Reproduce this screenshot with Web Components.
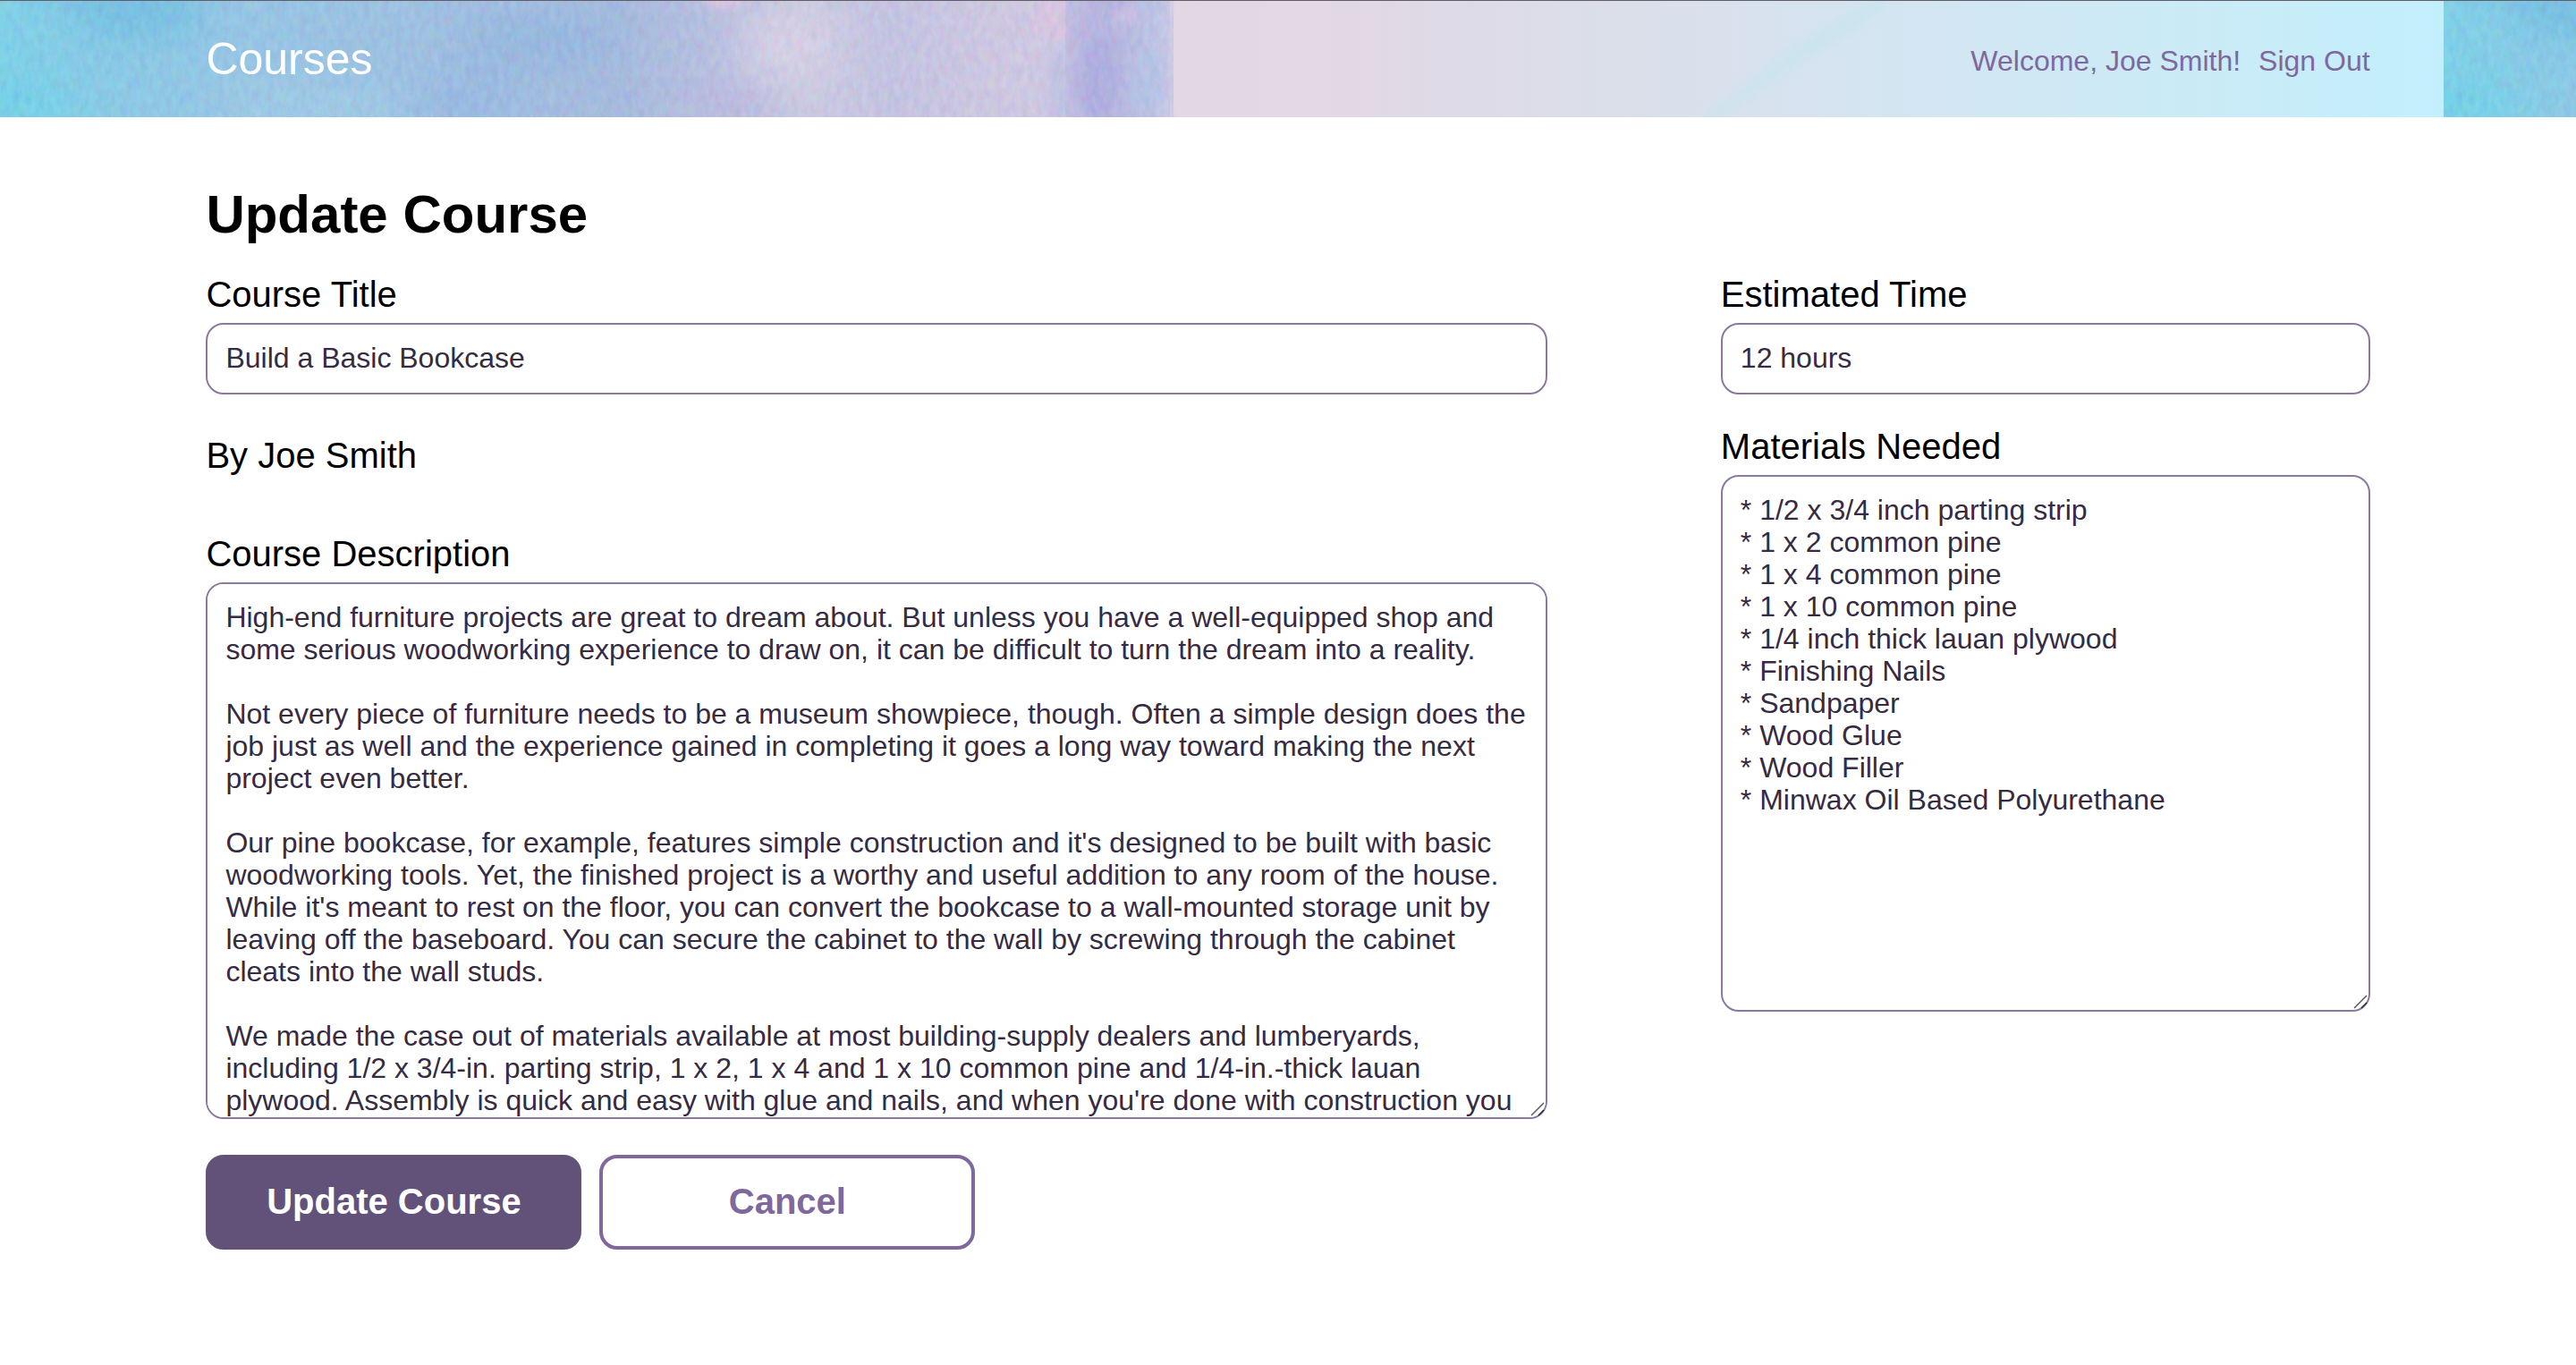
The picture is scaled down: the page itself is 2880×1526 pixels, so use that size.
<!DOCTYPE html>
<html lang="en">
<head>
<meta charset="utf-8">
<meta name="viewport" content="width=device-width, initial-scale=1">
<title>Courses</title>
<style>
  :root {
    --ink: #352b42;
    --purple: #7f689c;
    --purple-dark: #62527a;
    --field-border: #8c789f;
    --radius: 20px;
    --gutter: 8%;
  }
  body {
    margin: 0;
    background: #fff;
    color: #000;
    font-family: "Liberation Sans", Arial, sans-serif;
  }
</style>
</head>
<body>
<site-header user="Joe Smith"></site-header>
<update-course author="Joe Smith">
  <h1 slot="heading">Update Course</h1>
  <text-field slot="main" label="Course Title">Build a Basic Bookcase</text-field>
  <text-field slot="description" label="Course Description" multiline>High-end furniture projects are great to dream about. But unless you have a well-equipped shop and some serious woodworking experience to draw on, it can be difficult to turn the dream into a reality.

Not every piece of furniture needs to be a museum showpiece, though. Often a simple design does the job just as well and the experience gained in completing it goes a long way toward making the next project even better.

Our pine bookcase, for example, features simple construction and it's designed to be built with basic woodworking tools. Yet, the finished project is a worthy and useful addition to any room of the house. While it's meant to rest on the floor, you can convert the bookcase to a wall-mounted storage unit by leaving off the baseboard. You can secure the cabinet to the wall by screwing through the cabinet cleats into the wall studs.

We made the case out of materials available at most building-supply dealers and lumberyards, including 1/2 x 3/4-in. parting strip, 1 x 2, 1 x 4 and 1 x 10 common pine and 1/4-in.-thick lauan plywood. Assembly is quick and easy with glue and nails, and when you're done with construction you</text-field>
  <text-field slot="side" label="Estimated Time">12 hours</text-field>
  <text-field slot="side" label="Materials Needed" multiline>* 1/2 x 3/4 inch parting strip
* 1 x 2 common pine
* 1 x 4 common pine
* 1 x 10 common pine
* 1/4 inch thick lauan plywood
* Finishing Nails
* Sandpaper
* Wood Glue
* Wood Filler
* Minwax Oil Based Polyurethane</text-field>
  <action-button slot="actions" variant="primary">Update Course</action-button>
  <action-button slot="actions">Cancel</action-button>
</update-course>

<template id="watercolor-tpl">
  <style>
    :host { display: block; }
    svg { display: block; width: 100%; height: 100%; }
  </style>
  <svg viewBox="0 0 2880 130" preserveAspectRatio="none" aria-hidden="true">
    <defs>
      <linearGradient id="wash" gradientUnits="userSpaceOnUse" x1="0" y1="0" x2="1312" y2="0">
        <stop offset="0" stop-color="#7bd1e9"/>
        <stop offset=".08" stop-color="#85cbe7"/>
        <stop offset=".2" stop-color="#93c6e5"/>
        <stop offset=".38" stop-color="#9ebfe1"/>
        <stop offset=".53" stop-color="#a5bade"/>
        <stop offset=".62" stop-color="#bac0e0"/>
        <stop offset=".69" stop-color="#cccae2"/>
        <stop offset=".76" stop-color="#c5c4e2"/>
        <stop offset=".85" stop-color="#d0c8e2"/>
        <stop offset="1" stop-color="#cdcbe6"/>
      </linearGradient>
      <linearGradient id="band" x1="0" x2="1" y1="0" y2="0">
        <stop offset="0" stop-color="#c0bae2"/>
        <stop offset=".4" stop-color="#b5b3df"/>
        <stop offset=".8" stop-color="#bcc2e5"/>
        <stop offset="1" stop-color="#cccbe6"/>
      </linearGradient>
      <linearGradient id="pale" gradientUnits="userSpaceOnUse" x1="1308" y1="0" x2="2732" y2="0">
        <stop offset="0" stop-color="#e3d7e4"/>
        <stop offset=".12" stop-color="#e3d8e4"/>
        <stop offset=".22" stop-color="#dedae7"/>
        <stop offset=".36" stop-color="#dadfea"/>
        <stop offset=".43" stop-color="#d9e1ed"/>
        <stop offset=".54" stop-color="#d5e4f1"/>
        <stop offset=".75" stop-color="#cceaf5"/>
        <stop offset="1" stop-color="#c3effc"/>
      </linearGradient>
      <filter id="soft" x="-50%" y="-50%" width="200%" height="200%"><feGaussianBlur stdDeviation="22"/></filter>
      <filter id="edge" x="-30%" y="-30%" width="160%" height="160%"><feGaussianBlur stdDeviation="6"/></filter>
      <filter id="crisp" x="-20%" y="-20%" width="140%" height="140%"><feGaussianBlur stdDeviation="2"/></filter>
      <filter id="grain" x="0" y="0" width="100%" height="100%" color-interpolation-filters="sRGB">
        <feTurbulence type="fractalNoise" baseFrequency=".14 .07" numOctaves="3" seed="8"/>
        <feColorMatrix values="1.2 0 0 0 .1  0 1.2 0 0 .14  0 0 1.2 0 .24  0 0 0 0 .09"/>
      </filter>
      <clipPath id="left"><rect width="1320" height="130"/></clipPath>
      <clipPath id="right"><rect x="1308" width="1424" height="130"/></clipPath>
      <g id="paint">
        <g clip-path="url(#left)">
          <rect width="1312" height="130" fill="url(#wash)"/>
          <g filter="url(#soft)">
            <ellipse cx="150" cy="10" rx="80" ry="30" fill="#70c0e3"/>
            <ellipse cx="20" cy="120" rx="60" ry="30" fill="#6fd2e8"/>
            <ellipse cx="350" cy="120" rx="110" ry="25" fill="#9ecbe6"/>
            <ellipse cx="600" cy="45" rx="90" ry="25" fill="#92b6df"/>
            <ellipse cx="520" cy="110" rx="60" ry="25" fill="#94b8e2"/>
            <ellipse cx="880" cy="50" rx="50" ry="40" fill="#d9d2e6"/>
            <ellipse cx="810" cy="115" rx="50" ry="20" fill="#bcb8df"/>
          </g>
          <ellipse cx="810" cy="-2" rx="26" ry="10" fill="#e0c4e2" filter="url(#edge)"/>
          <rect x="1191" width="121" height="130" fill="url(#band)"/>
          <g filter="url(#edge)">
            <ellipse cx="1184" cy="98" rx="10" ry="48" fill="#c0c1e3"/>
            <ellipse cx="1228" cy="86" rx="20" ry="46" fill="#aeade0"/>
            <ellipse cx="1240" cy="4" rx="10" ry="9" fill="#b3b0df"/>
            <ellipse cx="1260" cy="17" rx="15" ry="10" fill="#cdbfe3"/>
            <ellipse cx="1282" cy="90" rx="16" ry="34" fill="#b5c3e6"/>
          </g>
          <path d="M1158 0h33v46q-30-2-38-14z" fill="#d9c6e1" filter="url(#crisp)"/>
          <rect width="1312" height="130" filter="url(#grain)"/>
        </g>
      </g>
    </defs>
    <use href="#paint"/>
    <g clip-path="url(#right)">
      <rect x="1312" width="1420" height="130" fill="url(#pale)"/>
      <path d="M1314 -10Q1302 60 1306 100l8 40h-30V-10z" fill="#d8d0e5" filter="url(#crisp)"/>
      <path d="M2098 -4h20Q2080 30 2040 52 1980 90 1920 135h-22Q1950 96 1990 62 2030 34 2098-4z" fill="#c3e5ec" opacity=".6" filter="url(#edge)"/>
    </g>
    <use href="#paint" x="2732"/>
  </svg>
</template>

<template id="header-tpl">
  <style>
    :host { display: block; }
    header {
      position: relative;
      display: flex;
      align-items: center;
      justify-content: space-between;
      min-height: 130px;
      padding: 0 var(--gutter);
      border-top: 1px solid #5f5c66;
    }
    water-color { position: absolute; inset: 0; z-index: -1; }
    a { color: inherit; text-decoration: none; }
    .brand { color: #fff; font-size: 50px; line-height: 58px; }
    nav {
      display: flex;
      gap: 20px;
      padding-top: 4px;
      color: var(--purple);
      font-size: 32px;
      line-height: 36px;
    }
  </style>
  <header>
    <water-color></water-color>
    <a class="brand" href="#">Courses</a>
    <nav><span class="welcome"></span><a href="#">Sign Out</a></nav>
  </header>
</template>

<template id="course-tpl">
  <style>
    :host { display: block; padding: 72px var(--gutter); }
    ::slotted(h1) { margin: 0 0 28px; font-size: 60px; line-height: 74px; }
    .columns {
      display: grid;
      grid-template-columns: 62fr 30fr;
      column-gap: 8%;
      align-items: start;
    }
    .side { display: grid; gap: 34px; }
    p { margin: 44px 0 62px; font-size: 40px; line-height: 48px; }
    .actions { display: flex; gap: 20px; margin-top: 40px; }
  </style>
  <form>
    <slot name="heading"></slot>
    <div class="columns">
      <div>
        <slot name="main"></slot>
        <p></p>
        <slot name="description"></slot>
      </div>
      <div class="side"><slot name="side"></slot></div>
    </div>
    <div class="actions"><slot name="actions"></slot></div>
  </form>
</template>

<template id="field-tpl">
  <style>
    :host { display: block; }
    label { display: block; margin-bottom: 8px; font-size: 40px; line-height: 48px; }
    .box { position: relative; }
    input, textarea {
      display: block;
      box-sizing: border-box;
      width: 100%;
      margin: 0;
      padding: 19px 20px;
      border: 2px solid var(--field-border);
      border-radius: var(--radius);
      background: #fff;
      color: var(--ink);
      font-family: inherit;
      font-size: 32px;
      line-height: 36px;
      outline: 0;
    }
    input { height: 80px; padding-bottom: 21px; }
    textarea { height: 600px; resize: none; overflow: auto; scrollbar-width: none; }
    svg { position: absolute; right: 3px; bottom: 3px; width: 16px; height: 16px; pointer-events: none; }
  </style>
  <label for="control"></label>
  <div class="box"></div>
</template>

<template id="button-tpl">
  <style>
    :host { display: block; }
    button {
      box-sizing: border-box;
      width: 420px;
      height: 106px;
      padding: 0 0 2px;
      border: 4px solid var(--purple);
      border-radius: var(--radius);
      background: #fff;
      color: var(--purple);
      font: bold 40px/46px "Liberation Sans", Arial, sans-serif;
      cursor: pointer;
    }
    :host([variant="primary"]) button {
      border-color: var(--purple-dark);
      background: var(--purple-dark);
      color: #fff;
    }
  </style>
  <button type="button"><slot></slot></button>
</template>

<script>
  class TemplateElement extends HTMLElement {
    constructor() {
      super();
      const tpl = document.getElementById(this.constructor.template);
      this.attachShadow({ mode: 'open' }).append(tpl.content.cloneNode(true));
    }
    $(selector) { return this.shadowRoot.querySelector(selector); }
  }

  class WaterColor extends TemplateElement {
    static template = 'watercolor-tpl';
  }

  class SiteHeader extends TemplateElement {
    static template = 'header-tpl';
    connectedCallback() {
      this.$('.welcome').textContent = `Welcome, ${this.getAttribute('user')}!`;
    }
  }

  class UpdateCourse extends TemplateElement {
    static template = 'course-tpl';
    connectedCallback() {
      this.$('p').textContent = `By ${this.getAttribute('author')}`;
    }
  }

  class TextField extends TemplateElement {
    static template = 'field-tpl';
    connectedCallback() {
      const multiline = this.hasAttribute('multiline');
      const control = document.createElement(multiline ? 'textarea' : 'input');
      control.id = 'control';
      if (!multiline) control.type = 'text';
      control.value = this.textContent;
      this.$('label').textContent = this.getAttribute('label');
      this.$('.box').replaceChildren(control);
      if (multiline) {
        // Corner grip
        this.$('.box').insertAdjacentHTML('beforeend',
          '<svg viewBox="0 0 16 16" fill="none" stroke-width="1.5" aria-hidden="true">' +
          '<path d="M1 15 15 1" stroke="#555"/><path d="M9 15l6-6" stroke="#2a2433"/></svg>');
      }
    }
  }

  class ActionButton extends TemplateElement {
    static template = 'button-tpl';
  }

  customElements.define('water-color', WaterColor);
  customElements.define('site-header', SiteHeader);
  customElements.define('update-course', UpdateCourse);
  customElements.define('text-field', TextField);
  customElements.define('action-button', ActionButton);
</script>
</body>
</html>
